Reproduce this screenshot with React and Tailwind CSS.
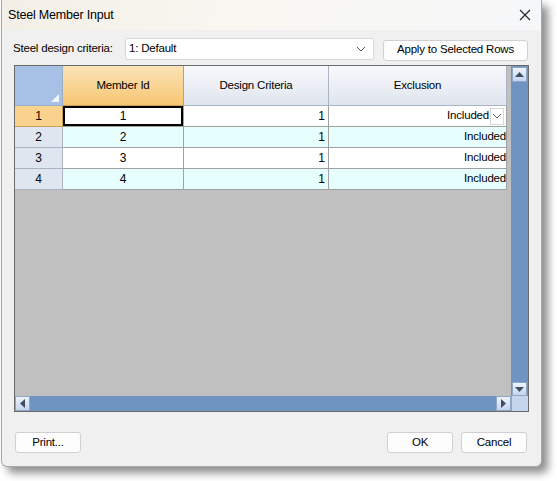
import React from "react";

const F = { fontFamily: '"Liberation Sans", Arial, sans-serif' };

function Btn({ children, className = "", w }) {
  return (
    <div
      className={`flex items-center justify-center h-[21px] rounded-[3px] border border-[#d0d0d0] bg-[#fdfdfd] text-[11.5px] tracking-[-0.2px] text-black ${w} ${className}`}
    >
      {children}
    </div>
  );
}

function Chevron() {
  return (
    <svg width="10" height="6" viewBox="0 0 10 6">
      <path d="M1 1 L5 5 L9 1" fill="none" stroke="#606060" strokeWidth="1" />
    </svg>
  );
}

export default function App() {
  const rows = [1, 2, 3, 4];
  return (
    <div className="w-[557px] h-[481px] bg-white" style={F}>
      <div className="ml-[1px] w-[541px] h-[467px] bg-[#f0f0f0] border-r border-b border-l border-[#a8a8a8] rounded-b-[6px] shadow-[6px_6px_8px_rgba(0,0,0,0.45)] flex flex-col">
        {/* title bar */}
        <div className="h-[30px] flex items-center justify-between pl-[6px] pr-[10px] bg-[linear-gradient(100deg,#f3efe6_0%,#f8f6f0_40%,#f6f7f9_100%)]">
          <span className="text-[12.5px] tracking-[-0.2px] text-black">Steel Member Input</span>
          <svg width="12" height="12" viewBox="0 0 12 12">
            <path d="M1 1 L11 11 M11 1 L1 11" stroke="#222" strokeWidth="1.1" />
          </svg>
        </div>
        {/* criteria row */}
        <div className="flex items-center h-[22px] mt-[8px] pl-[11px]">
          <span className="text-[11.5px] tracking-[-0.2px] text-black w-[112px]">Steel design criteria:</span>
          <div className="w-[249px] h-[22px] border border-[#d8d8d8] bg-white rounded-[2px] flex items-center justify-between pl-[3px] pr-[7px] text-[11.5px] tracking-[-0.2px]">
            <span>1: Default</span>
            <Chevron />
          </div>
          <Btn w="w-[145px]" className="ml-[9px] mt-[2px]">Apply to Selected Rows</Btn>
        </div>
        {/* grid */}
        <div className="ml-[12px] mt-[5px] w-[515px] h-[347px] border border-[#6a6a6a] bg-[#c0c0c0] flex flex-col">
          <div className="flex flex-1 min-h-0">
            <div className="flex flex-col w-[496px]">
              {/* header */}
              <div className="flex h-[40px] text-[11.5px] tracking-[-0.2px]">
                <div className="w-[48px] bg-[#a7c1e6] border-r border-b border-[#9aaec8] relative">
                  <svg className="absolute right-[3px] bottom-[3px]" width="8" height="8" viewBox="0 0 8 8">
                    <path d="M8 0 L8 8 L0 8 Z" fill="#f4f7fb" />
                  </svg>
                </div>
                <div className="w-[121px] flex items-center justify-center bg-[linear-gradient(#fbe3b7,#f6c672)] border-r border-b border-[#c9a05a]">
                  Member Id
                </div>
                <div className="w-[145px] flex items-center justify-center bg-[linear-gradient(#f8f9fc,#dfe5ee)] border-r border-b border-[#a9b4c4]">
                  Design Criteria
                </div>
                <div className="w-[178px] flex items-center justify-center bg-[linear-gradient(#f8f9fc,#dfe5ee)] border-r border-b border-[#a9b4c4]">
                  Exclusion
                </div>
              </div>
              {rows.map((r) => {
                const alt = r % 2 === 0;
                const bg = alt ? "bg-[#e6fffe]" : "bg-white";
                return (
                  <div key={r} className="flex h-[21px] text-[12px]">
                    <div
                      className={`w-[48px] flex items-center justify-center border-r border-b ${
                        r === 1 ? "bg-[#f9d38d] border-[#c9a05a]" : "bg-[#dfe6f0] border-[#a9b4c4]"
                      }`}
                    >
                      {r}
                    </div>
                    <div className={`w-[121px] flex items-center justify-center border-r border-b border-[#a0a0a0] ${bg}`}>
                      {r === 1 ? (
                        <div className="w-full h-full border-2 border-black flex items-center justify-center">1</div>
                      ) : (
                        r
                      )}
                    </div>
                    <div className={`w-[145px] flex items-center justify-end pr-[3px] border-r border-b border-[#a0a0a0] ${bg}`}>
                      1
                    </div>
                    <div className={`w-[178px] flex items-center justify-end border-r border-b border-[#a0a0a0] text-[11.5px] tracking-[-0.2px] ${bg}`}>
                      <span>Included</span>
                      {r === 1 && (
                        <div className="ml-[1px] mr-[2px] w-[14px] h-[17px] border border-[#d8d8d8] bg-white flex items-center justify-center">
                          <Chevron />
                        </div>
                      )}
                    </div>
                  </div>
                );
              })}
            </div>
            {/* vertical scrollbar */}
            <div className="ml-auto w-[17px] bg-[#6f94c1] flex flex-col justify-between">
              <div className="h-[15px] mx-[1px] mt-[1px] bg-[linear-gradient(#eef3fa,#c4d5ec)] border border-[#8ea7c8] flex items-center justify-center">
                <svg width="9" height="5" viewBox="0 0 9 5"><path d="M0 5 L4.5 0 L9 5 Z" fill="#3d4f66" /></svg>
              </div>
              <div className="h-[14px] mx-[1px] bg-[linear-gradient(#eef3fa,#c4d5ec)] border border-[#8ea7c8] flex items-center justify-center">
                <svg width="9" height="5" viewBox="0 0 9 5"><path d="M0 0 L4.5 5 L9 0 Z" fill="#3d4f66" /></svg>
              </div>
            </div>
          </div>
          {/* horizontal scrollbar */}
          <div className="h-[15px] flex bg-[#6f94c1]">
            <div className="w-[15px] h-[15px] bg-[linear-gradient(#eef3fa,#c4d5ec)] border border-[#8ea7c8] flex items-center justify-center">
              <svg width="5" height="9" viewBox="0 0 5 9"><path d="M5 0 L0 4.5 L5 9 Z" fill="#3d4f66" /></svg>
            </div>
            <div className="flex-1" />
            <div className="w-[15px] h-[15px] bg-[linear-gradient(#eef3fa,#c4d5ec)] border border-[#8ea7c8] flex items-center justify-center">
              <svg width="5" height="9" viewBox="0 0 5 9"><path d="M0 0 L5 4.5 L0 9 Z" fill="#3d4f66" /></svg>
            </div>
            <div className="w-[17px] h-[15px] bg-[#c4d5ec] border-l border-[#8ea7c8]" />
          </div>
        </div>
        {/* footer */}
        <div className="flex items-center mt-[20px] pl-[13px] pr-[14px]">
          <Btn w="w-[66px]">Print...</Btn>
          <Btn w="w-[66px]" className="ml-auto border-[#2f6fb0] bg-[#fdfdfd]">OK</Btn>
          <Btn w="w-[66px]" className="ml-[8px]">Cancel</Btn>
        </div>
      </div>
    </div>
  );
}
